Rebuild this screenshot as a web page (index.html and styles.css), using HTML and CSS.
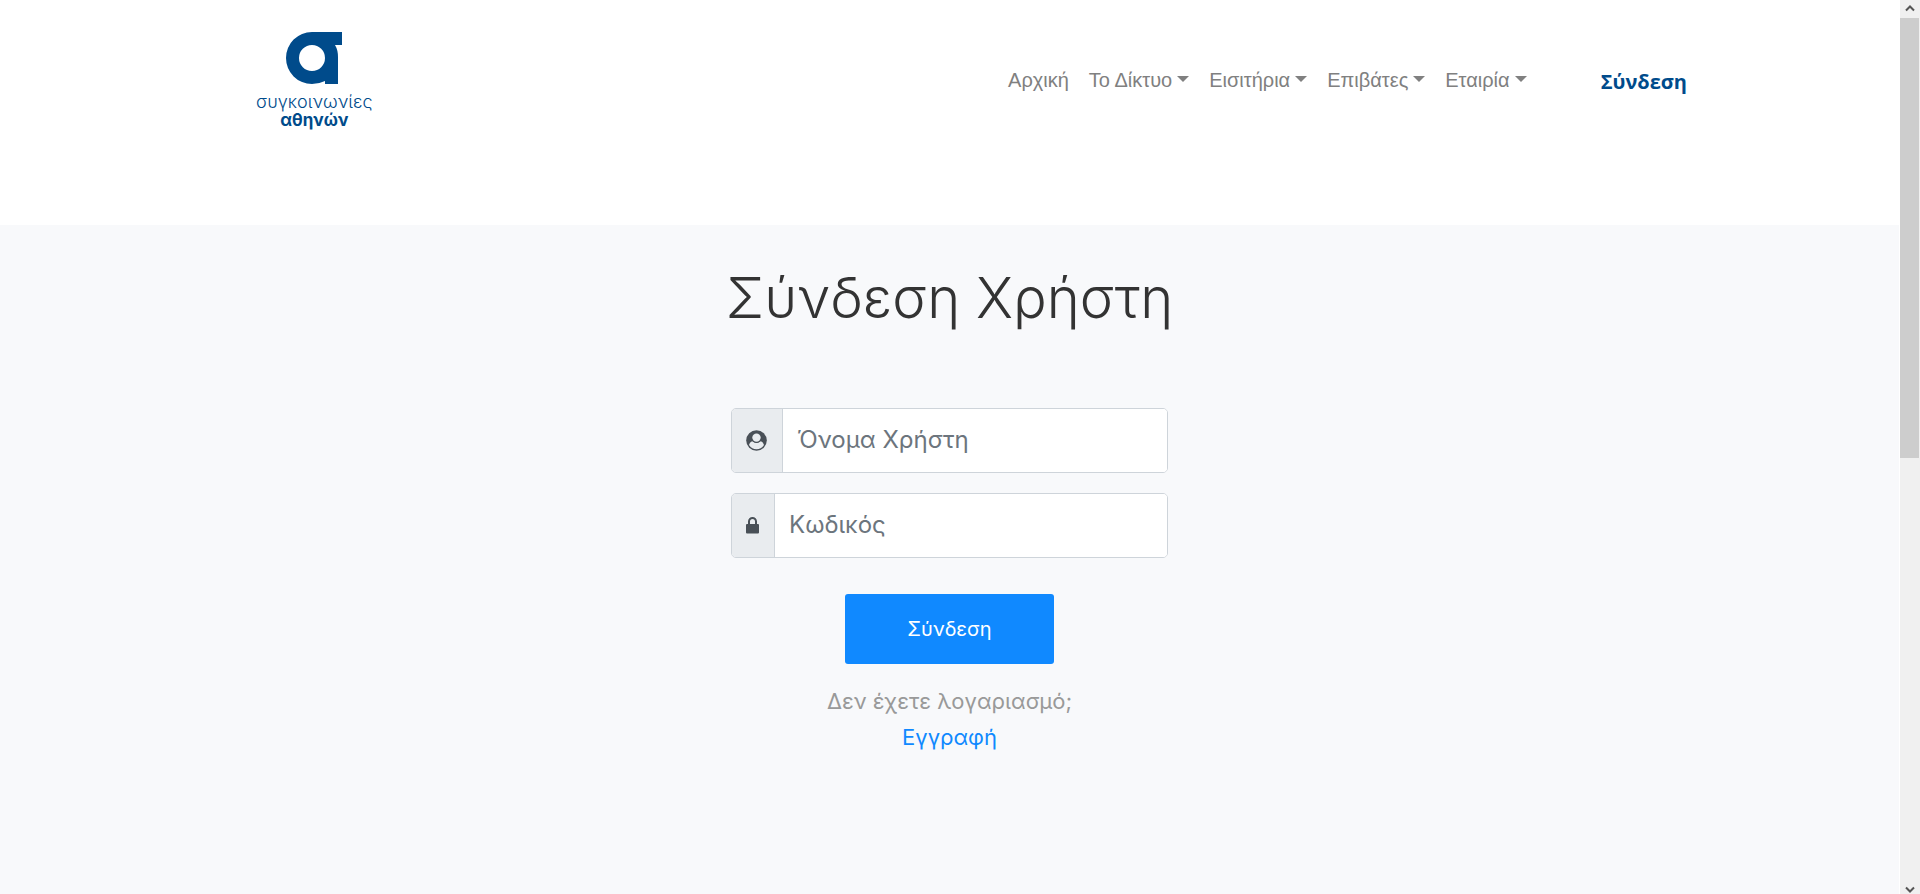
FILE: index.html
```html
<!DOCTYPE html>
<html lang="el">
<head>
<meta charset="utf-8">
<title>Σύνδεση Χρήστη</title>
<link rel="stylesheet" href="styles.css">
</head>
<body>
<div class="page">
  <header class="header">
    <a class="logo" href="#">
      <svg class="logo-mark" viewBox="0 0 56 52" aria-hidden="true"><path fill-rule="evenodd" d="M26 0H56V13H49Q52 18 52 25V52H39V49Q33 52 26 52A26 26 0 0 1 26 0ZM26 13A13 13 0 1 0 26 39A13 13 0 1 0 26 13Z"/></svg>
      <span class="logo-light">συγκοινωνίες</span>
      <span class="logo-bold">αθηνών</span>
    </a>
    <nav class="nav">
      <a class="nav-link" href="#">Αρχική</a>
      <a class="nav-link drop" href="#">Το Δίκτυο</a>
      <a class="nav-link drop" href="#">Εισιτήρια</a>
      <a class="nav-link drop" href="#">Επιβάτες</a>
      <a class="nav-link drop" href="#">Εταιρία</a>
      <a class="nav-login" href="#">Σύνδεση</a>
    </nav>
  </header>
  <main class="main">
    <h1 class="title">Σύνδεση Χρήστη</h1>
    <form class="form">
      <div class="group">
        <label class="addon" for="user" aria-label="Όνομα Χρήστη"><svg class="icon-user" viewBox="0 0 21 21" aria-hidden="true"><circle cx="10.500" cy="10.500" r="10.300" fill="#495057"/><path d="M3 15Q4 11.500 7 11.300Q10.500 14 14 11.300Q17 11.500 18 15Q15 19.300 10.500 19.300Q6 19.300 3 15Z" fill="#e9ecef"/><circle cx="10.500" cy="7.800" r="5.200" fill="#495057"/><circle cx="10.500" cy="7.600" r="4.200" fill="#e9ecef"/></svg></label>
        <input class="field" id="user" type="text" placeholder="Όνομα Χρήστη">
      </div>
      <div class="group">
        <label class="addon" for="pass" aria-label="Κωδικός"><svg class="icon-lock" viewBox="0 0 13 17" aria-hidden="true"><path fill="#495057" fill-rule="evenodd" d="M2 7V4.500A4.500 4.500 0 0 1 11 4.500V7H12Q13 7 13 8V15.500Q13 16.500 12 16.500H1Q0 16.500 0 15.500V8Q0 7 1 7ZM4 7H9V4.500A2.500 2.500 0 0 0 4 4.500Z"/></svg></label>
        <input class="field" id="pass" type="password" placeholder="Κωδικός">
      </div>
      <button class="submit" type="button">Σύνδεση</button>
    </form>
    <p class="note">Δεν έχετε λογαριασμό;</p>
    <a class="register" href="#">Εγγραφή</a>
  </main>
</div>
<div class="scrollbar" aria-hidden="true">
  <svg class="arrow" viewBox="0 0 10 7"><path d="M1 5.500L5 1.500L9 5.500"/></svg>
  <div class="track"><div class="thumb"></div></div>
  <svg class="arrow arrow-down" viewBox="0 0 10 7"><path d="M1 1.500L5 5.500L9 1.500"/></svg>
</div>
</body>
</html>
```
FILE: styles.css
```css
* { box-sizing: border-box; }
body {
  margin: 0;
  display: flex;
  min-height: 100vh;
  background: #fff;
  font-family: Inter, "Open Sans", sans-serif;
}
a { text-decoration: none; }
.page { flex: 1; display: flex; flex-direction: column; }
.header {
  display: flex;
  justify-content: space-between;
  align-items: flex-start;
  min-height: 225px;
  padding: 32px 212px 0 256px;
}
.logo {
  display: flex;
  flex-direction: column;
  align-items: center;
  color: #004b8b;
  line-height: 18px;
}
.logo-mark { width: 56px; height: 52px; margin-bottom: 9px; fill: #004b8b; }
.logo-light { font-size: 18px; font-weight: 300; }
.logo-bold { font-size: 17px; font-weight: 700; }
.nav {
  display: flex;
  align-items: center;
  gap: 20px;
  padding-top: 32px;
  line-height: 32px;
  font-family: "Liberation Sans", Arial, sans-serif;
  font-size: 20px;
}
.nav-link { padding-bottom: 2px; color: #808080; }
.drop::after {
  content: "";
  display: inline-block;
  margin-left: 5px;
  vertical-align: 5px;
  border: 6px solid transparent;
  border-top-color: #808080;
  border-bottom: 0;
}
.nav-login {
  margin-left: 54px;
  padding-top: 2px;
  color: #004b8b;
  font-family: "Open Sans", sans-serif;
  font-weight: 700;
}
.main {
  flex: 1;
  display: flex;
  flex-direction: column;
  align-items: center;
  padding: 38px 16px;
  background: #f8f9fb;
}
.title {
  margin: 0 0 75px;
  font-size: 56px;
  line-height: 70px;
  font-weight: 300;
  color: #333;
}
.form {
  display: flex;
  flex-direction: column;
  gap: 20px;
  width: 100%;
  max-width: 437px;
}
.group {
  display: flex;
  height: 65px;
  border: 1px solid #ced4da;
  border-radius: 5px;
  background: #fff;
  overflow: hidden;
}
.addon {
  display: flex;
  align-items: center;
  padding: 0 15px 0 14px;
  border-right: 1px solid #ced4da;
  background: #e9ecef;
}
.icon-user { width: 21px; height: 21px; }
.icon-lock { width: 13px; height: 17px; }
.field {
  flex: 1;
  min-width: 0;
  padding: 0 14px 2px;
  border: 0;
  outline: 0;
  background: #fff;
  font-family: inherit;
  font-size: 24px;
}
.field::placeholder { color: #6c757d; opacity: 1; }
.submit {
  align-self: center;
  width: 209px;
  height: 70px;
  margin-top: 16px;
  border: 0;
  border-radius: 3px;
  background: #1089ff;
  color: #fff;
  font-family: inherit;
  font-size: 20px;
}
.note, .register { margin: 0; font-size: 22px; line-height: 36px; }
.note { margin-top: 19px; color: #999; }
.register { color: #1089ff; }
.scrollbar {
  display: flex;
  flex-direction: column;
  align-items: center;
  width: 21px;
  height: 100vh;
  background: #f0f0f0;
  border-left: 1px solid #fff;
  border-right: 1px solid #f0f0f0;
}
.arrow { width: 10px; height: 7px; margin: 5px 0 6px; fill: none; stroke: #555; stroke-width: 2; }
.arrow-down { margin-bottom: 1px; }
.track { flex: 1; width: 100%; }
.thumb { height: 51%; background: #cdcdcd; }
```
